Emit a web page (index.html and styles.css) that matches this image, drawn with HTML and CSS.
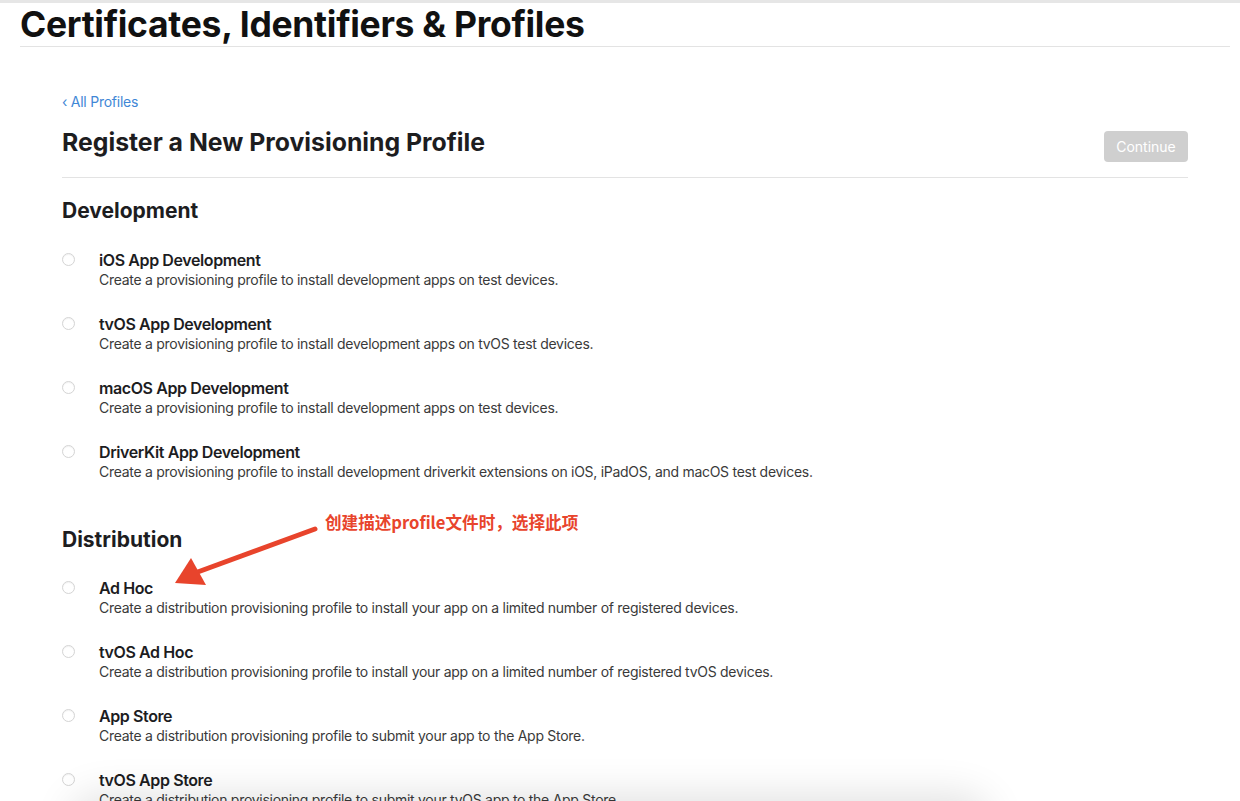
FILE: index.html
```html
<!DOCTYPE html>
<html>
<head>
  <title>Register a New Provisioning Profile</title>
  <link rel="stylesheet" href="styles.css">
</head>
<body>
  <div class="topbar"></div>
  <header class="page-header">
    <h1>Certificates, Identifiers &amp; Profiles</h1>
  </header>

  <main class="content">
    <a class="back-link" href="#">&lsaquo; All Profiles</a>

    <div class="title-row">
      <h2>Register a New Provisioning Profile</h2>
      <button type="button" class="continue" disabled>Continue</button>
    </div>

    <section class="group">
      <h3>Development</h3>
      <ul class="options">
        <li>
          <span class="radio"></span>
          <div>
            <div class="opt-title">iOS App Development</div>
            <div class="opt-desc">Create a provisioning profile to install development apps on test devices.</div>
          </div>
        </li>
        <li>
          <span class="radio"></span>
          <div>
            <div class="opt-title">tvOS App Development</div>
            <div class="opt-desc">Create a provisioning profile to install development apps on tvOS test devices.</div>
          </div>
        </li>
        <li>
          <span class="radio"></span>
          <div>
            <div class="opt-title">macOS App Development</div>
            <div class="opt-desc">Create a provisioning profile to install development apps on test devices.</div>
          </div>
        </li>
        <li>
          <span class="radio"></span>
          <div>
            <div class="opt-title">DriverKit App Development</div>
            <div class="opt-desc">Create a provisioning profile to install development driverkit extensions on iOS, iPadOS, and macOS test devices.</div>
          </div>
        </li>
      </ul>
    </section>

    <section class="group">
      <h3>Distribution</h3>
      <ul class="options">
        <li>
          <span class="radio"></span>
          <div>
            <div class="opt-title">Ad Hoc</div>
            <div class="opt-desc">Create a distribution provisioning profile to install your app on a limited number of registered devices.</div>
          </div>
        </li>
        <li>
          <span class="radio"></span>
          <div>
            <div class="opt-title">tvOS Ad Hoc</div>
            <div class="opt-desc">Create a distribution provisioning profile to install your app on a limited number of registered tvOS devices.</div>
          </div>
        </li>
        <li>
          <span class="radio"></span>
          <div>
            <div class="opt-title">App Store</div>
            <div class="opt-desc">Create a distribution provisioning profile to submit your app to the App Store.</div>
          </div>
        </li>
        <li>
          <span class="radio"></span>
          <div>
            <div class="opt-title">tvOS App Store</div>
            <div class="opt-desc">Create a distribution provisioning profile to submit your tvOS app to the App Store.</div>
          </div>
        </li>
      </ul>
    </section>
  </main>

  <!-- red annotation pointing at Ad Hoc -->
  <div class="note">创建描述profile文件时，选择此项</div>
  <svg class="note-arrow" width="160" height="70" viewBox="0 0 160 70">
    <line x1="150" y1="8" x2="30" y2="52" stroke="#e8442c" stroke-width="5" stroke-linecap="round"/>
    <polygon points="10,62 26,37 41,64" fill="#e8442c"/>
  </svg>

  <div class="bottom-shade"></div>
</body>
</html>
```

FILE: styles.css
```css
body {
  margin: 0;
  font-family: Inter, "Noto Sans", "Noto Sans CJK SC", sans-serif;
  color: #1d1d1f;
  background: #fff;
  overflow: hidden;
  height: 801px;
  position: relative;
}

.topbar {
  height: 3px;
  background: #e6e6e6;
}

.page-header {
  margin: 0 10px 0 20px;
  border-bottom: 1px solid #e3e3e3;
}

.page-header h1 {
  margin: 0;
  font-size: 35.5px;
  line-height: 43px;
  font-weight: 700;
  letter-spacing: -0.3px;
  color: #111;
}

.content {
  margin: 0 52px 0 62px;
  padding-top: 45px;
}

.back-link {
  display: block;
  font-size: 14px;
  line-height: 20px;
  letter-spacing: -0.25px;
  color: #3f87d6;
  text-decoration: none;
}

.title-row {
  display: flex;
  justify-content: space-between;
  align-items: flex-start;
  margin-top: 15px;
  padding-bottom: 15px;
  border-bottom: 1px solid #e3e3e3;
}

.title-row h2 {
  margin: 0;
  font-size: 24.8px;
  line-height: 30px;
  font-weight: 700;
  color: #1d1d1f;
}

.continue {
  margin-top: 4px;
  width: 84px;
  height: 31px;
  border: none;
  border-radius: 4px;
  background: #cfcfcf;
  color: #fff;
  font-family: inherit;
  font-size: 14px;
}

.group h3 {
  margin: 20px 0 26px;
  font-size: 21px;
  line-height: 26px;
  font-weight: 700;
  color: #1d1d1f;
}

.group + .group h3 {
  margin-top: 45px;
  margin-bottom: 25px;
}

.options {
  list-style: none;
  margin: 0;
  padding: 0;
}

.options li {
  display: flex;
  gap: 24px;
  margin-bottom: 24px;
}

.radio {
  flex: none;
  width: 11px;
  height: 11px;
  margin-top: 3px;
  border: 1px solid #d4d4d4;
  border-radius: 50%;
  background: #fff;
  box-shadow: inset 0 1px 1px rgba(0, 0, 0, 0.05);
}

.opt-title {
  font-size: 16px;
  line-height: 20px;
  font-weight: 600;
  letter-spacing: -0.4px;
  color: #1d1d1f;
}

.opt-desc {
  font-size: 14px;
  line-height: 20px;
  letter-spacing: -0.28px;
  color: #3a3a3a;
}

.note {
  position: absolute;
  left: 325px;
  top: 511px;
  font-size: 16.6px;
  line-height: 22px;
  font-weight: 700;
  color: #e8442c;
  font-family: "Noto Sans CJK SC", sans-serif;
}

.note-arrow {
  position: absolute;
  left: 165px;
  top: 521px;
}

.bottom-shade {
  position: absolute;
  left: 80px;
  width: 900px;
  top: 805px;
  height: 40px;
  border-radius: 20px;
  box-shadow: 0 0 40px 10px rgba(0, 0, 0, 0.12);
}
```
